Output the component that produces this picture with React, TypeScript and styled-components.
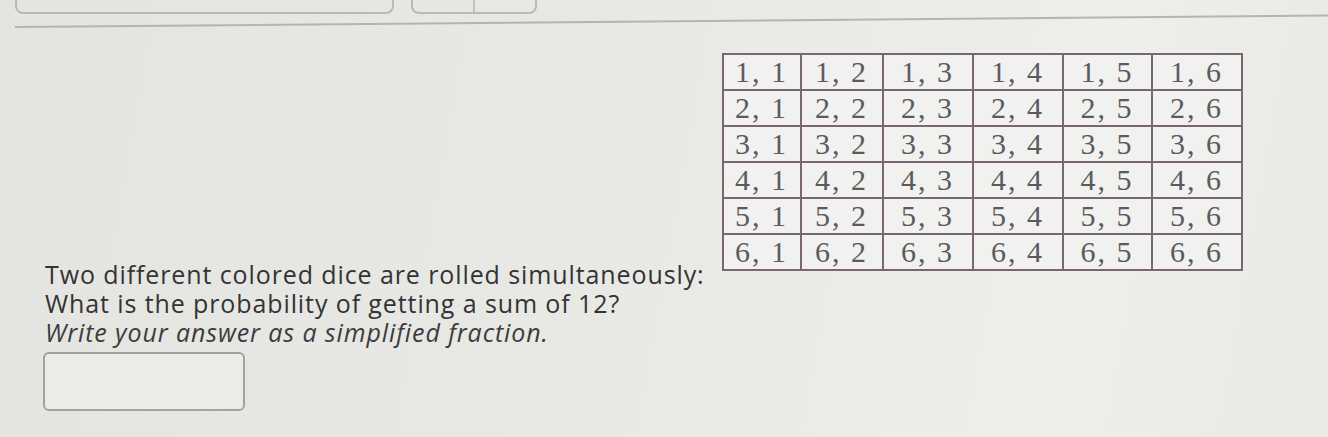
import React from 'react'
import styled, { createGlobalStyle } from 'styled-components'

const GlobalStyle = createGlobalStyle`
  html, body {
    margin: 0;
    padding: 0;
  }
  body {
    width: 1328px;
    height: 437px;
    overflow: hidden;
    background: linear-gradient(100deg, #e4e4e1 0%, #e8e8e5 45%, #eeeeeb 80%, #e9e9e6 100%);
    font-family: 'Open Sans', Lato, sans-serif;
  }
`

const Page = styled.div`
  width: 1328px;
  height: 437px;
  display: flex;
  flex-direction: column;
`

const TopBar = styled.div`
  display: flex;
  gap: 17px;
  padding-left: 15px;
`

interface TabProps {
  width: string
}

const Tab = styled.div<TabProps>`
  width: ${props => props.width};
  height: 12px;
  border: 2px solid #b9b9b6;
  border-top: none;
  border-radius: 0 0 8px 8px;
  display: flex;
`

const TabHalf = styled.div`
  flex: 1;
  & + & {
    border-left: 2px solid #c2c2bf;
  }
`

const Rule = styled.div`
  margin: 12px 0 0 15px;
  height: 2px;
  width: 1330px;
  background: #b4b4b1;
  transform-origin: left center;
  transform: rotate(-0.5deg);
`

const Question = styled.div`
  padding-left: 45px;
  margin-top: 25px;
  color: #333335;
  font-size: 25px;
  line-height: 29px;
  letter-spacing: 0.9px;
`

const FirstLine = styled.div`
  display: flex;
  align-items: flex-end;
`

const Line = styled.div<{ italic?: boolean }>`
  font-style: ${props => (props.italic ? 'italic' : 'normal')};
  color: ${props => (props.italic ? '#3c3c3e' : '#333335')};
  white-space: nowrap;
`

const Table = styled.table`
  border-collapse: collapse;
  margin-left: 17px;
  margin-bottom: 18px;
  background: #f1f1ef;
  font-family: 'Liberation Serif', 'Times New Roman', serif;
  color: #5b5b5b;
  font-size: 30px;
  letter-spacing: 2px;
`

const Cell = styled.td<{ width: number }>`
  width: ${props => props.width}px;
  height: 34px;
  padding: 0;
  border: 2px solid #7a6670;
  text-align: center;
  line-height: 34px;
`

const AnswerBox = styled.div`
  width: 198px;
  height: 55px;
  margin: 5px 0 0 43px;
  border: 2px solid #a2a2a0;
  border-radius: 6px;
  background: #ebebe8;
`

const widths = [76, 80, 88, 88, 87, 88]
const dice = [1, 2, 3, 4, 5, 6]

export default function App() {
  return (
    <Page>
      <GlobalStyle />
      <TopBar>
        <Tab width="375px" />
        <Tab width="122px">
          <TabHalf />
          <TabHalf />
        </Tab>
      </TopBar>
      <Rule />
      <Question>
        <FirstLine>
          <Line>Two different colored dice are rolled simultaneously:</Line>
          <Table>
            <tbody>
              {dice.map(a => (
                <tr key={a}>
                  {dice.map((b, i) => (
                    <Cell key={b} width={widths[i]}>
                      {a}, {b}
                    </Cell>
                  ))}
                </tr>
              ))}
            </tbody>
          </Table>
        </FirstLine>
        <Line>What is the probability of getting a sum of 12?</Line>
        <Line italic>Write your answer as a simplified fraction.</Line>
      </Question>
      <AnswerBox />
    </Page>
  )
}
